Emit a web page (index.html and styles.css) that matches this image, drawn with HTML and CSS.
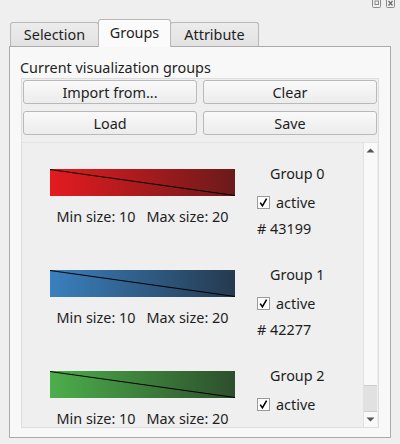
FILE: index.html
```html
<!DOCTYPE html>
<html>
<head>
<meta charset="utf-8">
<link rel="stylesheet" href="styles.css">
</head>
<body>
<div class="titlebar">
  <svg class="tbicon" width="9" height="8" viewBox="0 0 9 8"><rect x="0.5" y="-1" width="8" height="8.5" rx="1" fill="none" stroke="#8a8a8a"/><rect x="3" y="1" width="3.5" height="3.5" fill="none" stroke="#8a8a8a"/></svg>
  <svg class="tbicon" width="9" height="8" viewBox="0 0 9 8"><rect x="0.5" y="-1" width="8" height="8.5" rx="1" fill="none" stroke="#8a8a8a"/><path d="M2.5 1 L6.5 5.5 M6.5 1 L2.5 5.5" stroke="#6a6a6a" stroke-width="1.2"/></svg>
</div>
<div class="tabs">
  <div class="tab">Selection</div>
  <div class="tab active">Groups</div>
  <div class="tab">Attribute</div>
</div>
<div class="pane">
  <div class="caption">Current visualization groups</div>
  <div class="frame">
    <div class="buttons">
      <div class="btn">Import from...</div>
      <div class="btn">Clear</div>
      <div class="btn">Load</div>
      <div class="btn">Save</div>
    </div>
    <div class="scrollarea">
      <div class="viewport">
        <div class="row">
          <div class="left">
            <svg class="bar" width="185" height="27" viewBox="0 0 185 27">
              <defs><linearGradient id="g0" x1="0" x2="1" y1="0" y2="0"><stop offset="0" stop-color="#e41b1f"/><stop offset="1" stop-color="#6c1a1b"/></linearGradient></defs>
              <rect width="185" height="27" fill="url(#g0)"/>
              <line x1="0" y1="0.5" x2="185" y2="26.5" stroke="#000" stroke-width="1"/>
            </svg>
            <div class="sizes"><span>Min size: 10</span><span>Max size: 20</span></div>
          </div>
          <div class="right">
            <div class="gname">Group 0</div>
            <div class="check"><span class="box"><svg width="11" height="11" viewBox="0 0 11 11"><path d="M2.2 5.6 L4.4 8.8 L8.6 1.6" fill="none" stroke="#000" stroke-width="1.6"/></svg></span><span>active</span></div>
            <div class="count"># 43199</div>
          </div>
        </div>
        <div class="row">
          <div class="left">
            <svg class="bar" width="185" height="27" viewBox="0 0 185 27">
              <defs><linearGradient id="g1" x1="0" x2="1" y1="0" y2="0"><stop offset="0" stop-color="#3a80be"/><stop offset="1" stop-color="#253a4f"/></linearGradient></defs>
              <rect width="185" height="27" fill="url(#g1)"/>
              <line x1="0" y1="0.5" x2="185" y2="26.5" stroke="#000" stroke-width="1"/>
            </svg>
            <div class="sizes"><span>Min size: 10</span><span>Max size: 20</span></div>
          </div>
          <div class="right">
            <div class="gname">Group 1</div>
            <div class="check"><span class="box"><svg width="11" height="11" viewBox="0 0 11 11"><path d="M2.2 5.6 L4.4 8.8 L8.6 1.6" fill="none" stroke="#000" stroke-width="1.6"/></svg></span><span>active</span></div>
            <div class="count"># 42277</div>
          </div>
        </div>
        <div class="row">
          <div class="left">
            <svg class="bar" width="185" height="27" viewBox="0 0 185 27">
              <defs><linearGradient id="g2" x1="0" x2="1" y1="0" y2="0"><stop offset="0" stop-color="#4cae4b"/><stop offset="1" stop-color="#2d4f2c"/></linearGradient></defs>
              <rect width="185" height="27" fill="url(#g2)"/>
              <line x1="0" y1="0.5" x2="185" y2="26.5" stroke="#000" stroke-width="1"/>
            </svg>
            <div class="sizes"><span>Min size: 10</span><span>Max size: 20</span></div>
          </div>
          <div class="right">
            <div class="gname">Group 2</div>
            <div class="check"><span class="box"><svg width="11" height="11" viewBox="0 0 11 11"><path d="M2.2 5.6 L4.4 8.8 L8.6 1.6" fill="none" stroke="#000" stroke-width="1.6"/></svg></span><span>active</span></div>
          </div>
        </div>
      </div>
      <div class="scrollbar">
        <div class="arrow"><svg width="9" height="5" viewBox="0 0 9 5"><path d="M0.5 4.5 L4.5 0.5 L8.5 4.5 Z" fill="#555"/></svg></div>
        <div class="track"></div>
        <div class="handle"></div>
        <div class="arrow down"><svg width="9" height="5" viewBox="0 0 9 5"><path d="M0.5 0.5 L4.5 4.5 L8.5 0.5 Z" fill="#555"/></svg></div>
      </div>
    </div>
  </div>
</div>
</body>
</html>
```
FILE: styles.css
```css
html, body {
  margin: 0;
  padding: 0;
}
body {
  width: 400px;
  height: 444px;
  overflow: hidden;
  background: #efefef;
  font-family: "Noto Sans", "DejaVu Sans", sans-serif;
  font-size: 14.4px;
  color: #1e1e1e;
}
.titlebar {
  height: 19px;
  display: flex;
  justify-content: flex-end;
  align-items: flex-start;
  gap: 5px;
  padding-right: 5px;
}
.tbicon {
  display: block;
}
.tabs {
  height: 27px;
  display: flex;
  align-items: flex-end;
  padding-left: 10px;
}
.tab {
  height: 24px;
  box-sizing: border-box;
  border: 1px solid #b8b8b8;
  border-bottom: none;
  border-radius: 3px 3px 0 0;
  background: linear-gradient(#ececec, #e2e2e2);
  line-height: 24px;
  margin-right: -1px;
  text-align: center;
  padding: 0;
}
.tab:first-child { width: 89px; }
.tab:last-child { width: 89px; }
.tab.active {
  height: 28px;
  width: 73px;
  margin-bottom: -1px;
  background: #fbfbfb;
  position: relative;
  z-index: 1;
  line-height: 26px;
}
.pane {
  margin: 0 9px;
  height: 392px;
  box-sizing: border-box;
  border: 1px solid #ababab;
  background: #f8f8f8;
}
.caption {
  margin-top: 12px;
  padding-left: 10px;
  line-height: 17px;
}
.frame {
  margin: 2px 0 0 11px;
  width: 358px;
  height: 350px;
  box-sizing: border-box;
  border: 1px solid #dedede;
  padding-top: 1px;
  background: #efefef;
  display: flex;
  flex-direction: column;
}
.buttons {
  display: grid;
  grid-template-columns: 174px 174px;
  grid-auto-rows: 24px;
  column-gap: 6px;
  row-gap: 7px;
  padding: 0 1px;
}
.btn {
  box-sizing: border-box;
  border: 1px solid #b9b9b9;
  border-radius: 3px;
  background: linear-gradient(#f9f9f9, #ececec);
  text-align: center;
  line-height: 23px;
}
.scrollarea {
  margin-top: 7px;
  height: 285px;
  display: flex;
  border-top: 1px solid #e4e4e4;
  box-sizing: border-box;
}
.viewport {
  width: 341px;
  overflow: hidden;
}
.row {
  height: 101px;
  display: flex;
  flex-shrink: 0;
}
.left {
  margin-left: 28px;
  width: 185px;
  padding-top: 26px;
}
.bar {
  display: block;
}
.sizes {
  margin-top: 12px;
  line-height: 17px;
  display: flex;
  justify-content: center;
  gap: 11px;
  white-space: nowrap;
}
.right {
  margin-left: 22px;
  width: 90px;
  padding-top: 22px;
}
.gname {
  line-height: 17px;
  padding-left: 13px;
}
.check {
  margin-top: 12px;
  display: flex;
  align-items: center;
  gap: 6px;
  line-height: 17px;
}
.box {
  width: 13px;
  height: 13px;
  box-sizing: border-box;
  border: 1px solid #9a9a9a;
  background: #fff;
  display: flex;
  align-items: center;
  justify-content: center;
}
.box svg { display: block; }
.count {
  margin-top: 9px;
  line-height: 17px;
}
.scrollbar {
  width: 14px;
  box-sizing: border-box;
  border-left: 1px solid #e2e2e2;
  background: #f9f9f9;
  display: flex;
  flex-direction: column;
}
.arrow {
  height: 14px;
  display: flex;
  align-items: center;
  justify-content: center;
}
.arrow.down {
  height: 15px;
}
.track {
  flex: 1;
}
.handle {
  height: 27px;
  box-sizing: border-box;
  background: #e1e1e1;
  border-top: 1px solid #cdcdcd;
  border-bottom: 1px solid #cdcdcd;
}
```
